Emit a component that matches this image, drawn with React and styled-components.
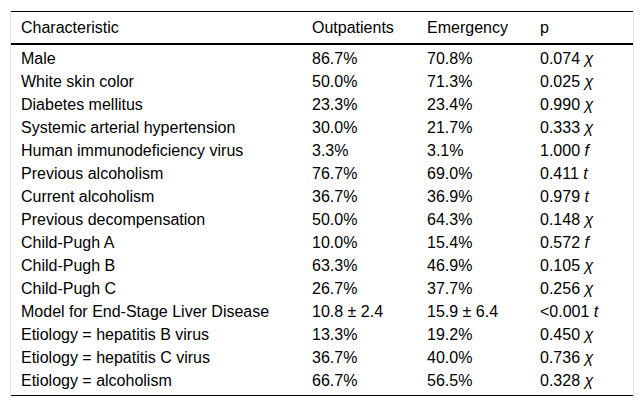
import React from "react";
import styled, { createGlobalStyle } from "styled-components";

const GlobalStyle = createGlobalStyle`
  body {
    margin: 0;
    background: #ffffff;
  }
`;

const Frame = styled.div`
  margin: 11px 0 0 10px;
  width: 622px;
  border-left: 1px solid #e4e4e4;
  border-right: 1px solid #e4e4e4;
`;

const Table = styled.table`
  width: 622px;
  table-layout: fixed;
  border-collapse: collapse;
  font-family: "Liberation Sans", Arial, sans-serif;
  font-size: 16px;
  color: #000;
  border-top: 1px solid #000;
  border-bottom: 1px solid #000;
`;

const HeadCell = styled.th`
  text-align: left;
  font-weight: normal;
  padding: 4px 0 4px 10px;
  line-height: 23px;
  border-bottom: 2px solid #000;
  white-space: nowrap;
`;

const Row = styled.tr`
  &:first-child td {
    padding-top: 2px;
  }
  &:last-child td {
    padding-bottom: 3px;
  }
`;

const Cell = styled.td`
  padding: 0 0 0 10px;
  line-height: 23px;
  white-space: nowrap;
`;

const Test = styled.i`
  font-style: italic;
`;

const columns = [291, 115, 113, 103];

const rows = [
  ["Male", "86.7%", "70.8%", "0.074", "χ"],
  ["White skin color", "50.0%", "71.3%", "0.025", "χ"],
  ["Diabetes mellitus", "23.3%", "23.4%", "0.990", "χ"],
  ["Systemic arterial hypertension", "30.0%", "21.7%", "0.333", "χ"],
  ["Human immunodeficiency virus", "3.3%", "3.1%", "1.000", "f"],
  ["Previous alcoholism", "76.7%", "69.0%", "0.411", "t"],
  ["Current alcoholism", "36.7%", "36.9%", "0.979", "t"],
  ["Previous decompensation", "50.0%", "64.3%", "0.148", "χ"],
  ["Child-Pugh A", "10.0%", "15.4%", "0.572", "f"],
  ["Child-Pugh B", "63.3%", "46.9%", "0.105", "χ"],
  ["Child-Pugh C", "26.7%", "37.7%", "0.256", "χ"],
  ["Model for End-Stage Liver Disease", "10.8 ± 2.4", "15.9 ± 6.4", "<0.001", "t"],
  ["Etiology = hepatitis B virus", "13.3%", "19.2%", "0.450", "χ"],
  ["Etiology = hepatitis C virus", "36.7%", "40.0%", "0.736", "χ"],
  ["Etiology = alcoholism", "66.7%", "56.5%", "0.328", "χ"],
];

export default function App() {
  return (
    <>
      <GlobalStyle />
      <Frame>
        <Table>
          <colgroup>
            {columns.map((w, i) => (
              <col key={i} style={{ width: w }} />
            ))}
          </colgroup>
          <thead>
            <tr>
              <HeadCell>Characteristic</HeadCell>
              <HeadCell>Outpatients</HeadCell>
              <HeadCell>Emergency</HeadCell>
              <HeadCell>p</HeadCell>
            </tr>
          </thead>
          <tbody>
            {rows.map((r) => (
              <Row key={r[0]}>
                <Cell>{r[0]}</Cell>
                <Cell>{r[1]}</Cell>
                <Cell>{r[2]}</Cell>
                <Cell>
                  {r[3]} <Test>{r[4]}</Test>
                </Cell>
              </Row>
            ))}
          </tbody>
        </Table>
      </Frame>
    </>
  );
}
